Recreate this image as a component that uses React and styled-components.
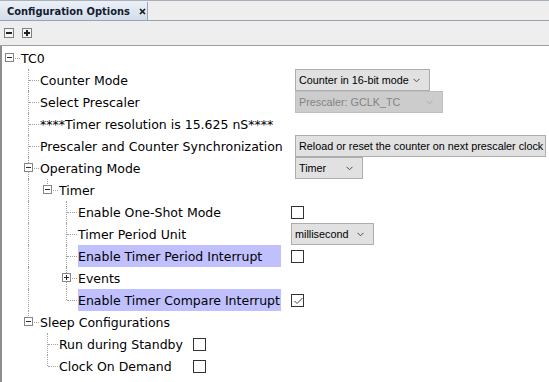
import React from "react";
import styled, { createGlobalStyle, css } from "styled-components";

const Global = createGlobalStyle`
  html, body { margin: 0; padding: 0; background: #ffffff; }
  body { width: 549px; height: 382px; overflow: hidden; }
  #root { height: 100%; }
`;

const Page = styled.div`
  display: flex;
  flex-direction: column;
  height: 382px;
  width: 549px;
  background: #eeeeee;
`;

const TabBar = styled.div`
  display: flex;
  height: 19px;
  border-top: 1px solid #a7b0bb;
  border-bottom: 1px solid #98a4b2;
  background: #eeeeee;
`;

const Tab = styled.div`
  display: flex;
  align-items: center;
  gap: 9px;
  width: 148px;
  box-sizing: border-box;
  padding-left: 7px;
  margin-top: 1px;
  background: linear-gradient(#eaf0f8, #d3dcea);
  border-right: 1px solid #9aa6b5;
  font-family: "DejaVu Sans Condensed", "DejaVu Sans", sans-serif;
  font-weight: bold;
  font-size: 11px;
  color: #14202e;
  white-space: nowrap;
`;

const Toolbar = styled.div`
  display: flex;
  align-items: center;
  gap: 8px;
  height: 24px;
  padding-left: 4px;
  border-bottom: 1px solid #a0a0a0;
`;

const ToolButton = styled.div`
  position: relative;
  width: 10px;
  height: 10px;
  box-sizing: border-box;
  border: 1px solid #7f7f7f;
  background: #f6f6f6;
  &::before {
    content: "";
    position: absolute;
    left: 1px;
    top: 3px;
    width: 6px;
    height: 2px;
    background: #222;
  }
  ${(p) =>
    p.$plus &&
    css`
      &::after {
        content: "";
        position: absolute;
        left: 3px;
        top: 1px;
        width: 2px;
        height: 6px;
        background: #222;
      }
    `}
`;

const Panel = styled.div`
  flex: 1;
  background: #ffffff;
  border-left: 2px solid #8e8e8e;
  padding-top: 1px;
  overflow: hidden;
  font-family: "DejaVu Sans", Verdana, sans-serif;
  font-size: 12.5px;
  color: #000;
`;

const Row = styled.div`
  display: flex;
  align-items: center;
  height: 22px;
  white-space: nowrap;
`;

const Cell = styled.div`
  position: relative;
  flex: none;
  width: 19px;
  height: 22px;
  ${(p) =>
    (p.$kind === "pipe" || p.$kind === "tee" || p.$kind === "elbow") &&
    css`
      &::before {
        content: "";
        position: absolute;
        left: 7px;
        top: 0;
        height: ${p.$kind === "elbow" ? "11px" : "22px"};
        border-left: 1px dotted #a0a0a0;
      }
    `}
  ${(p) =>
    p.$kind !== "pipe" &&
    p.$kind !== "blank" &&
    css`
      &::after {
        content: "";
        position: absolute;
        left: 8px;
        right: 1px;
        top: 11px;
        border-top: 1px dotted #a0a0a0;
      }
    `}
`;

const Expander = styled.div`
  position: absolute;
  left: 3px;
  top: 6px;
  width: 9px;
  height: 9px;
  box-sizing: border-box;
  border: 1px solid #858585;
  background: #ffffff;
  z-index: 1;
  &::before {
    content: "";
    position: absolute;
    left: 1px;
    top: 3px;
    width: 5px;
    height: 1px;
    background: #2a2a2a;
  }
  ${(p) =>
    !p.$open &&
    css`
      &::after {
        content: "";
        position: absolute;
        left: 3px;
        top: 1px;
        width: 1px;
        height: 5px;
        background: #2a2a2a;
      }
    `}
`;

const Label = styled.div`
  flex: none;
  display: flex;
  align-items: center;
  height: 22px;
  box-sizing: border-box;
  ${(p) => p.$width && css`width: ${p.$width}px;`}
  ${(p) => p.$highlight && css`background: #c0c0ff;`}
`;

const Value = styled.div`
  flex: none;
  display: flex;
  align-items: center;
  margin-left: 10px;
  font-family: "Liberation Sans", Arial, sans-serif;
  font-size: 10.8px;
`;

const Combo = styled.div`
  display: flex;
  align-items: center;
  justify-content: space-between;
  box-sizing: border-box;
  width: ${(p) => p.$width}px;
  height: 22px;
  padding: 0 9px 0 3px;
  border: 1px solid ${(p) => (p.$disabled ? "#bfbfbf" : "#adadad")};
  background: ${(p) => (p.$disabled ? "#cccccc" : "#e1e1e1")};
  color: ${(p) => (p.$disabled ? "#838383" : "#000")};
`;

const Button = styled.div`
  display: flex;
  align-items: center;
  box-sizing: border-box;
  width: ${(p) => p.$width}px;
  height: 22px;
  padding-left: 3px;
  border: 1px solid #adadad;
  background: #e1e1e1;
`;

const Check = styled.div`
  position: relative;
  width: 13px;
  height: 13px;
  box-sizing: border-box;
  border: 1px solid #333333;
  background: #ffffff;
  svg {
    position: absolute;
    left: 1px;
    top: 1px;
  }
`;

const Chevron = ({ disabled }) => (
  <svg width="7" height="5" viewBox="0 0 7 5">
    <polyline
      points="0.5,0.8 3.5,3.8 6.5,0.8"
      fill="none"
      stroke={disabled ? "#a8a8a8" : "#4a4a4a"}
      strokeWidth="1"
    />
  </svg>
);

const renderValue = (v) => {
  if (!v) return null;
  if (v.type === "combo")
    return (
      <Combo $width={v.width} $disabled={v.disabled}>
        <span>{v.text}</span>
        <Chevron disabled={v.disabled} />
      </Combo>
    );
  if (v.type === "button") return <Button $width={v.width}>{v.text}</Button>;
  if (v.type === "check")
    return (
      <Check>
        {v.checked && (
          <svg width="11" height="11" viewBox="0 0 11 11">
            <polyline points="1.5,5 4,7.5 9.5,2" fill="none" stroke="#444" strokeWidth="1" />
          </svg>
        )}
      </Check>
    );
  return null;
};

const tree = {
  label: "TC0",
  open: true,
  width: 245,
  children: [
    { label: "Counter Mode", value: { type: "combo", text: "Counter in 16-bit mode", width: 135 } },
    { label: "Select Prescaler", value: { type: "combo", text: "Prescaler: GCLK_TC", width: 148, disabled: true } },
    { label: "****Timer resolution is 15.625 nS****" },
    {
      label: "Prescaler and Counter Synchronization",
      value: { type: "button", text: "Reload or reset the counter on next prescaler clock", width: 251 },
    },
    {
      label: "Operating Mode",
      open: true,
      value: { type: "combo", text: "Timer", width: 68 },
      children: [
        {
          label: "Timer",
          open: true,
          width: 203,
          children: [
            { label: "Enable One-Shot Mode", value: { type: "check" } },
            { label: "Timer Period Unit", value: { type: "combo", text: "millisecond", width: 83 } },
            { label: "Enable Timer Period Interrupt", highlight: true, value: { type: "check" } },
            { label: "Events", open: false, children: [] },
            { label: "Enable Timer Compare Interrupt", highlight: true, value: { type: "check", checked: true } },
          ],
        },
      ],
    },
    {
      label: "Sleep Configurations",
      open: true,
      width: 124,
      children: [
        { label: "Run during Standby", value: { type: "check" } },
        { label: "Clock On Demand", value: { type: "check" } },
      ],
    },
  ],
};

const TreeRows = ({ node, guides, isRoot, isLast, labelWidth }) => {
  const hasKids = !!node.children;
  const kind = isRoot ? "root" : isLast ? "elbow" : "tee";
  const childGuides = [...guides, isLast ? "blank" : "pipe"];
  const kids = node.children || [];
  return (
    <>
      <Row>
        {guides.map((g, i) => (
          <Cell key={i} $kind={g} />
        ))}
        <Cell $kind={kind}>{hasKids && <Expander $open={node.open} />}</Cell>
        <Label $width={node.value ? labelWidth : undefined} $highlight={node.highlight}>
          {node.label}
        </Label>
        {node.value && <Value>{renderValue(node.value)}</Value>}
      </Row>
      {node.open &&
        kids.map((c, i) => (
          <TreeRows
            key={c.label}
            node={c}
            guides={childGuides}
            isLast={i === kids.length - 1}
            labelWidth={node.width || labelWidth}
          />
        ))}
    </>
  );
};

export default function App() {
  return (
    <>
      <Global />
      <Page>
        <TabBar>
          <Tab>
            <span>Configuration Options</span>
            <svg width="7" height="7" viewBox="0 0 7 7">
              <path d="M1 1 L6 6 M6 1 L1 6" stroke="#1a1a1a" strokeWidth="1.7" />
            </svg>
          </Tab>
        </TabBar>
        <Toolbar>
          <ToolButton />
          <ToolButton $plus />
        </Toolbar>
        <Panel>
          <TreeRows node={tree} guides={[]} isRoot isLast />
        </Panel>
      </Page>
    </>
  );
}
